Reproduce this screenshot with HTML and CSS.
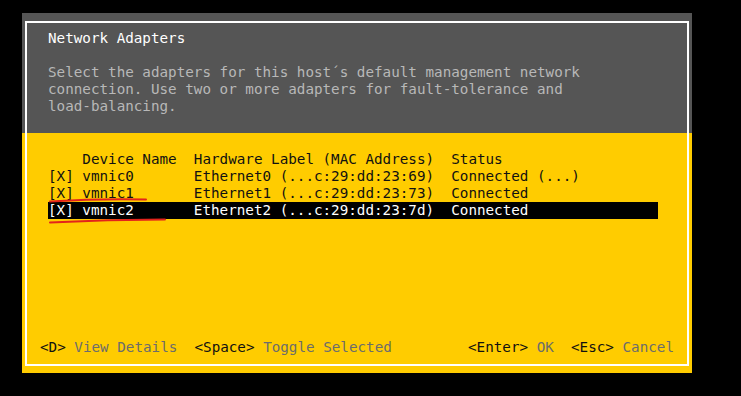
FILE: index.html
```html
<!DOCTYPE html>
<html>
<head>
<meta charset="utf-8">
<link rel="stylesheet" href="styles.css">
</head>
<body>
<div class="panel">
  <div class="frame">
    <div class="head">
      <div class="title">Network Adapters</div>
      <div class="desc">Select the adapters for this host´s default management network
connection. Use two or more adapters for fault-tolerance and
load-balancing.</div>
    </div>
    <div class="main">
      <div class="table">
        <div class="row">    Device Name  Hardware Label (MAC Address)  Status</div>
        <div class="row">[X] vmnic0       Ethernet0 (...c:29:dd:23:69)  Connected (...)</div>
        <div class="row">[X] vmnic1       Ethernet1 (...c:29:dd:23:73)  Connected</div>
        <div class="row sel">[X] vmnic2       Ethernet2 (...c:29:dd:23:7d)  Connected</div>
      </div>
      <div class="foot">
        <span class="grp"><span class="key">&lt;D&gt;</span> <span class="lbl">View Details</span>  <span class="key">&lt;Space&gt;</span> <span class="lbl">Toggle Selected</span></span>
        <span class="grp"><span class="key">&lt;Enter&gt;</span> <span class="lbl">OK</span>  <span class="key">&lt;Esc&gt;</span> <span class="lbl">Cancel</span></span>
      </div>
    </div>
  </div>
</div>
<svg class="marks" width="741" height="396" viewBox="0 0 741 396">
  <path d="M50 201.5 Q98 198.5 146 199.5" />
  <path d="M50 222.5 Q108 219.5 165 219.5" />
</svg>
</body>
</html>
```
FILE: styles.css
```css
html, body {
  margin: 0;
  padding: 0;
  background: #000;
  width: 741px;
  height: 396px;
  overflow: hidden;
}
body {
  position: relative;
  font-family: "DejaVu Sans Mono", "Liberation Mono", monospace;
  font-size: 14.25px;
  line-height: 17px;
}
.panel {
  margin: 13px 0 0 22px;
  width: 670px;
  height: 360px;
  box-sizing: border-box;
  padding: 8px 3px 7px 3px;
  background: linear-gradient(#555555 0, #555555 120px, #ffcc00 120px, #ffcc00 100%);
}
.frame {
  height: 100%;
  box-sizing: border-box;
  border: 2px solid #ffffff;
  display: flex;
  flex-direction: column;
}
.head {
  height: 110px;
  box-sizing: border-box;
  padding: 7px 0 0 21px;
}
.title {
  color: #ffffff;
  white-space: pre;
}
.desc {
  margin-top: 17px;
  color: #b8b8b8;
  white-space: pre;
}
.main {
  flex: 1;
  display: flex;
  flex-direction: column;
}
.table {
  padding: 18px 0 0 21px;
}
.row {
  white-space: pre;
  color: #111;
  width: 610px;
  height: 17px;
}
.row.sel {
  background: #000;
  color: #fff;
}
.foot {
  margin-top: auto;
  padding: 0 13px 8px 13px;
  display: flex;
  justify-content: space-between;
  white-space: pre;
}
.key {
  color: #111;
}
.lbl {
  color: #6c6c6c;
}
.marks {
  position: absolute;
  left: 0;
  top: 0;
  fill: none;
  stroke: #e3231b;
  stroke-width: 2;
  stroke-linecap: round;
}
```
